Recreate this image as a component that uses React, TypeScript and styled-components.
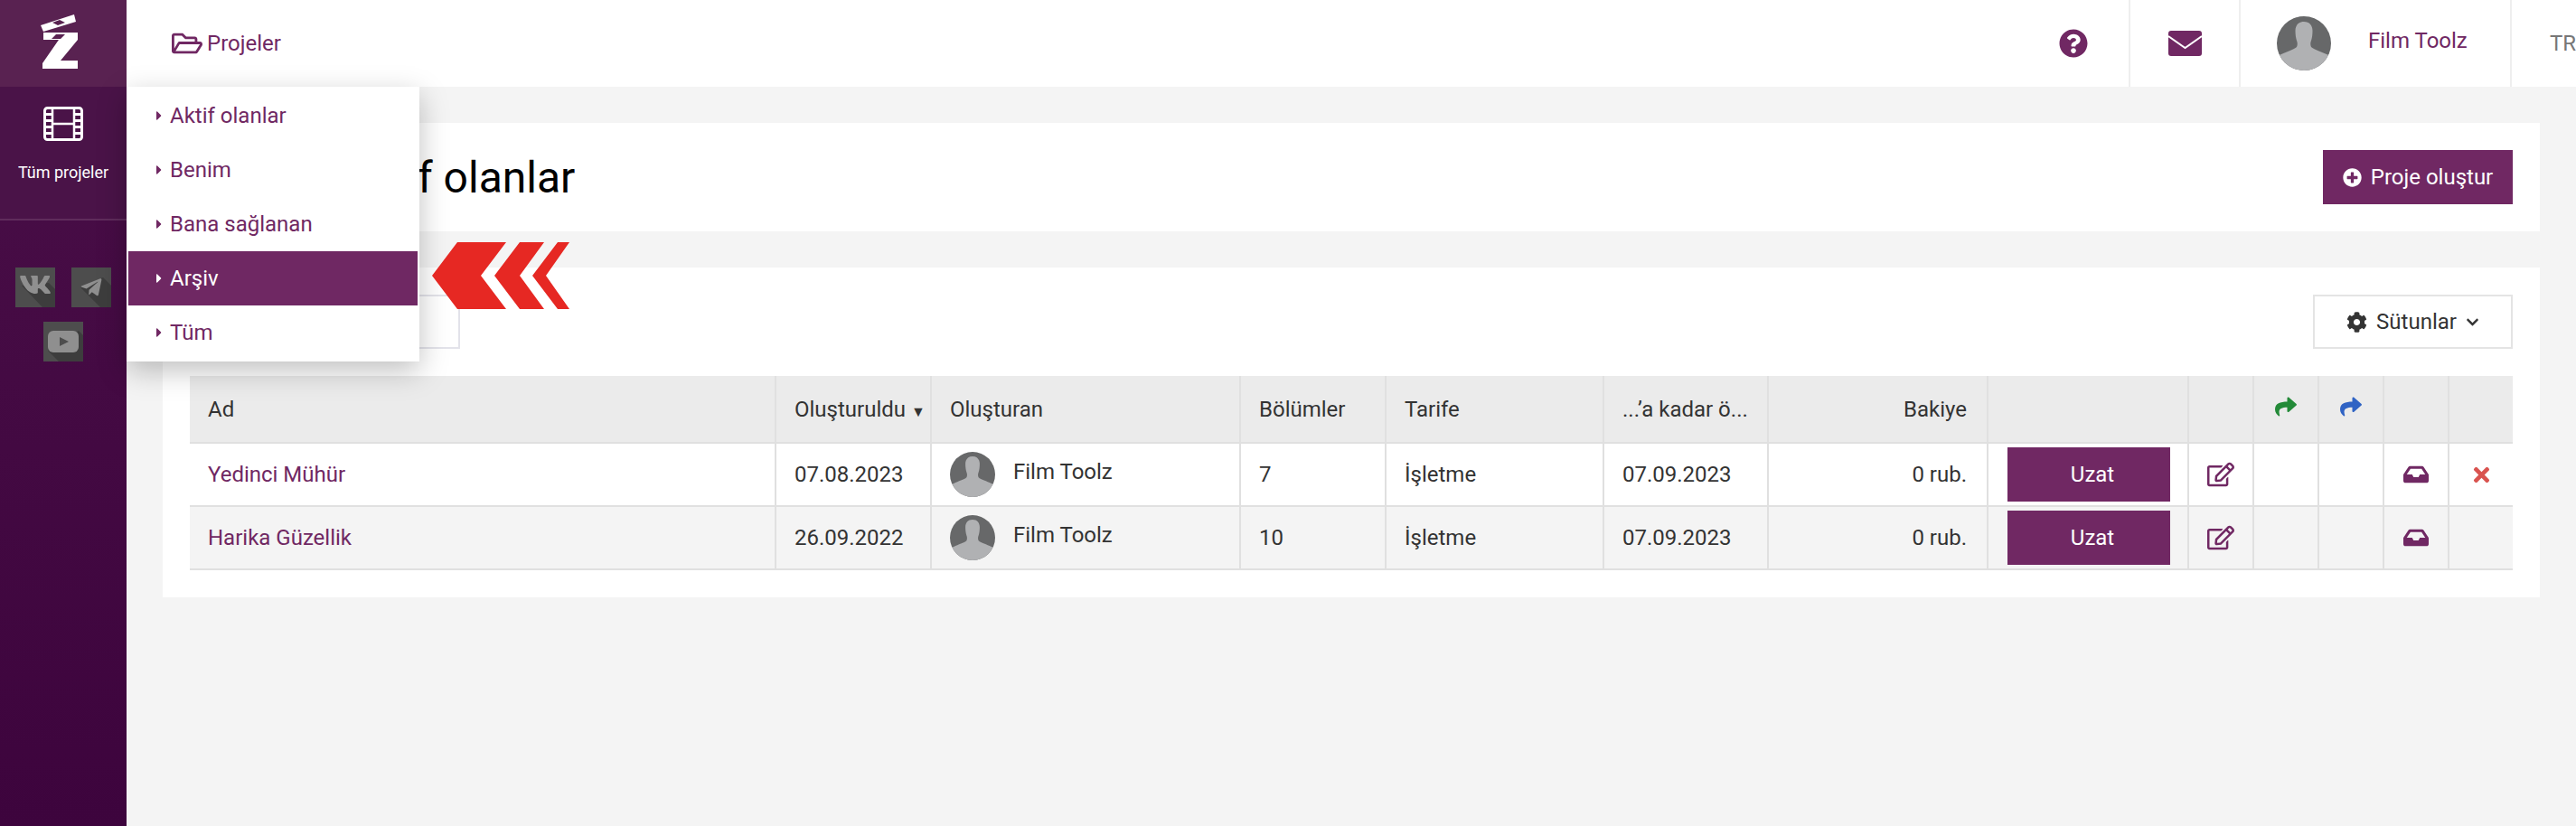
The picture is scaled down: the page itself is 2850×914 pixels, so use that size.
import React from "react";
import styled, { createGlobalStyle } from "styled-components";
import {
  FaCaretRight, FaChevronDown, FaCog, FaEdit, FaInbox, FaPlusCircle, FaQuestionCircle,
  FaRegEdit, FaRegFolderOpen, FaShare, FaTelegramPlane, FaTimes, FaVk,
} from "react-icons/fa";

const PURPLE = "#702863";
const Global = createGlobalStyle`
  html, body { margin: 0; padding: 0; background: #f4f4f4; }
  body { font-family: Roboto, "Liberation Sans", sans-serif; color: #333; }
  * { box-sizing: border-box; }
`;
const Page = styled.div`position: relative; display: flex; width: 2850px; height: 914px; overflow: hidden;`;
const Sidebar = styled.aside`width: 140px; flex: none; display: flex; flex-direction: column; background: linear-gradient(180deg, #4a0f48 0%, #3d043d 100%);`;
const LogoTile = styled.div`height: 96px; display: flex; justify-content: center; background: #592251;`;
const NavTile = styled.div`height: 148px; border-bottom: 2px solid #5f2c5c; background: #4a1348; display: flex; flex-direction: column; align-items: center; padding-top: 22px; color: #fff; font-size: 18px; gap: 24px;`;
const Socials = styled.div`display: flex; flex-wrap: wrap; justify-content: center; gap: 16px 18px; padding: 52px 14px 0;`;
const Main = styled.div`flex: 1; min-width: 0; display: flex; flex-direction: column;`;
const Header = styled.header`height: 96px; flex: none; background: #fff; display: flex; align-items: stretch;`;
const Crumb = styled.div`display: flex; align-items: center; gap: 5px; padding-left: 50px; color: ${PURPLE}; font-size: 24px; margin-right: auto;`;
const HeaderCell = styled.div<{ $w: number }>`width: ${(p) => p.$w}px; border-left: 2px solid #eee; display: flex; align-items: center; justify-content: center; color: ${PURPLE};`;
const HelpCell = styled.div`display: flex; align-items: center; padding-right: 45px; color: ${PURPLE};`;
const UserCell = styled(HeaderCell)`justify-content: flex-start; padding-left: 40px; gap: 41px; font-size: 24px; align-items: center;`;
const UserName = styled.span`position: relative; top: -3px;`;
const LangCell = styled(HeaderCell)`color: #777; font-size: 24px; justify-content: flex-end; padding-right: 0;`;
const Content = styled.main`padding: 40px 40px 0; display: flex; flex-direction: column; gap: 40px;`;
const Panel = styled.section`background: #fff; padding: 30px;`;
const TitleRow = styled.div`display: flex; justify-content: space-between; align-items: center; height: 60px;`;
const Title = styled.h1`margin: 0; font-size: 48px; font-weight: 400; color: #000; white-space: nowrap; padding-left: 169px;`;
const PrimaryButton = styled.button`height: 60px; width: 210px; border: 0; background: ${PURPLE}; color: #fff; font: 400 24px Roboto, sans-serif; display: flex; align-items: center; justify-content: center; gap: 10px;`;
const Toolbar = styled.div`display: flex; justify-content: space-between; margin-bottom: 30px;`;
const Search = styled.div`width: 299px; height: 60px; border: 2px solid #e3e3ea;`;
const ColumnsButton = styled.button`height: 60px; width: 221px; background: #fff; border: 2px solid #e4e4e4; color: #333; font: 400 24px Roboto, sans-serif; display: flex; align-items: center; justify-content: center; gap: 10px;`;
const Table = styled.table`width: 2570px; table-layout: fixed; border-collapse: collapse; font-size: 24px;`;
const Th = styled.th<{ $right?: boolean }>`height: 74px; background: #ebebeb; font-weight: 400; color: #333; text-align: ${(p) => (p.$right ? "right" : "left")}; padding: 0 22px 0 20px; border-left: 2px solid #e0e0e0; border-bottom: 2px solid #e0e0e0; white-space: nowrap; overflow: hidden; &:first-child { border-left: 0; }`;
const Tr = styled.tr<{ $alt?: boolean }>`background: ${(p) => (p.$alt ? "#f4f4f4" : "#fff")};`;
const Td = styled.td<{ $right?: boolean; $center?: boolean }>`height: 70px; padding: 0 22px 0 20px; border-left: 2px solid #e0e0e0; border-bottom: 2px solid #e0e0e0; text-align: ${(p) => (p.$right ? "right" : p.$center ? "center" : "left")}; white-space: nowrap; &:first-child { border-left: 0; }`;
const IconTd = styled(Td)`padding: 0; text-align: center; line-height: 0;`;
const ProjectLink = styled.a`color: ${PURPLE};`;
const Author = styled.div`display: flex; gap: 20px;  align-items: center;`;
const AuthorName = styled.span`position: relative; top: -3px;`;
const Extend = styled.button`width: 180px; height: 60px; border: 0; background: ${PURPLE}; color: #fff; font: 400 24px Roboto, sans-serif; padding: 0 0 0 8px; display: block;`;
const Menu = styled.nav`position: absolute; left: 140px; top: 96px; width: 324px; height: 304px; padding: 2px; background: #fff; box-shadow: 0 10px 30px rgba(0, 0, 0, 0.25); z-index: 3;`;
const MenuItem = styled.div<{ $active?: boolean }>`height: 60px; display: flex; align-items: center; gap: 4px; padding-left: 26px; font-size: 24px; color: ${(p) => (p.$active ? "#fff" : PURPLE)}; background: ${(p) => (p.$active ? "#6f2863" : "transparent")};`;
const Arrows = styled.svg`position: absolute; left: 478px; top: 268px; z-index: 4;`;

const Avatar = ({ size }: { size: number }) => (
  <svg width={size} height={size} viewBox="0 0 60 60" style={{ flex: "none", display: "block" }}>
    <defs><clipPath id={`av${size}`}><circle cx="30" cy="30" r="30" /></clipPath></defs>
    <g clipPath={`url(#av${size})`}>
      <rect width="60" height="60" fill="#676869" />
      <path fill="#b0b1b3" d="M30 6c6 0 9.500 4 9.500 10 0 4-.5 8-1.500 11-1 2-1 5 0 7 3 3 11 5 17 8l5 2v16H0V44l5-2c6-3 14-5 17-8 1-2 1-5 0-7-1-3-1.500-7-1.500-11C20.500 10 24 6 30 6z" />
    </g>
  </svg>
);
const Logo = () => (
  <svg width="140" height="96" viewBox="0 0 140 96">
    <path fill="#fff" d="M45 28 82 16l2 8-36 11z" />
    <path fill="#592251" d="M58 25l8-3 6 3-8 3z" />
    <path fill="#fff" fillRule="evenodd" d="M48 36h38v8L67 67h19v9H47v-6l18-26H48zM62 38l-5 5h10l5-5z" />
  </svg>
);
const Film = () => (
  <svg width="44" height="38" viewBox="0 0 44 38">
    <rect x="1.500" y="1.500" width="41" height="35" rx="3" fill="none" stroke="#fff" strokeWidth="3" />
    <path fill="none" stroke="#fff" strokeWidth="2.500" d="M10 2v34M34 2v34M10 19h24" />
    <path fill="#fff" d="M3 7h7v3H3zM3 14h7v3H3zM3 21h7v3H3zM3 28h7v3H3zM34 7h7v3h-7zM34 14h7v3h-7zM34 21h7v3h-7zM34 28h7v3h-7z" />
  </svg>
);
const Envelope = () => (
  <svg width="37" height="28" viewBox="0 0 37 28">
    <rect width="37" height="28" rx="3" fill={PURPLE} />
    <path d="M0 6l18.500 13L37 6" fill="none" stroke="#fff" strokeWidth="2" />
  </svg>
);
const Tile = ({ children, shadow }: { children: React.ReactNode; shadow: string }) => (
  <svg width="44" height="44" viewBox="0 0 44 44" style={{ display: "block" }}>
    <rect width="44" height="44" fill="#4d4d4d" />
    <polygon points={shadow} fill="#3d3d3d" />
    {children}
  </svg>
);
const Chevrons = () => (
  <Arrows width="152" height="74" viewBox="478 268 152 74">
    <polygon fill="#e62823" points="506,268 560,268 532,305 560,342 506,342 478,305" />
    <polygon fill="#e62823" points="575,268 602,268 575,305 602,342 575,342 547,305" />
    <polygon fill="#e62823" points="617,268 630,268 604,305 630,342 617,342 589,305" />
  </Arrows>
);
const widths = [648, 172, 342, 161, 241, 182, 243, 222, 72, 72, 72, 72, 71];
const rows = [
  { name: "Yedinci Mühür", created: "07.08.2023", parts: "7", del: true },
  { name: "Harika Güzellik", created: "26.09.2022", parts: "10", del: false },
];
const menu = ["Aktif olanlar", "Benim", "Bana sağlanan", "Arşiv", "Tüm"];

export default function App() {
  return (
    <Page>
      <Global />
      <Sidebar>
        <LogoTile><Logo /></LogoTile>
        <NavTile><Film /><span>Tüm projeler</span></NavTile>
        <Socials>
          <Tile shadow="7,20 37,17 44,24 44,44 30,44"><FaVk x={4} y={1} size={36} color="#8f8f8f" /></Tile>
          <Tile shadow="10,22 35,11 44,20 44,44 32,44"><FaTelegramPlane x={9} y={9} size={26} color="#8f8f8f" /></Tile>
          <Tile shadow="5,32 39,10 44,15 44,44 17,44">
            <rect x="5" y="10" width="34" height="24" rx="6" fill="#8f8f8f" />
            <path d="M18 17l10 5-10 5z" fill="#4d4d4d" />
          </Tile>
        </Socials>
      </Sidebar>
      <Main>
        <Header>
          <Crumb><FaRegFolderOpen size={34} />Projeler</Crumb>
          <HelpCell><FaQuestionCircle size={32} /></HelpCell>
          <HeaderCell $w={122}><Envelope /></HeaderCell>
          <UserCell $w={300}><Avatar size={60} /><UserName>Film Toolz</UserName></UserCell>
          <LangCell $w={73}>TR</LangCell>
        </Header>
        <Content>
          <Panel>
            <TitleRow>
              <Title>Aktif olanlar</Title>
              <PrimaryButton><FaPlusCircle size={21} />Proje oluştur</PrimaryButton>
            </TitleRow>
          </Panel>
          <Panel>
            <Toolbar>
              <Search />
              <ColumnsButton><FaCog size={23} />Sütunlar<FaChevronDown size={15} /></ColumnsButton>
            </Toolbar>
            <Table>
              <colgroup>{widths.map((w, i) => <col key={i} width={w} />)}</colgroup>
              <thead>
                <tr>
                  <Th>Ad</Th>
                  <Th>Oluşturuldu <span style={{ fontSize: 16 }}>▼</span></Th>
                  <Th>Oluşturan</Th>
                  <Th>Bölümler</Th>
                  <Th>Tarife</Th>
                  <Th>...’a kadar ö...</Th>
                  <Th $right>Bakiye</Th>
                  <Th />
                  <Th />
                  <Th style={{ textAlign: "center", padding: 0 }}><FaShare size={24} color="#238a38" /></Th>
                  <Th style={{ textAlign: "center", padding: 0 }}><FaShare size={24} color="#2f63c4" /></Th>
                  <Th />
                  <Th />
                </tr>
              </thead>
              <tbody>
                {rows.map((r, i) => (
                  <Tr key={r.name} $alt={i === 1}>
                    <Td><ProjectLink>{r.name}</ProjectLink></Td>
                    <Td>{r.created}</Td>
                    <Td><Author><Avatar size={50} /><AuthorName>Film Toolz</AuthorName></Author></Td>
                    <Td>{r.parts}</Td>
                    <Td>İşletme</Td>
                    <Td>07.09.2023</Td>
                    <Td $right>0 rub.</Td>
                    <Td style={{ padding: "0 0 0 21px" }}><Extend>Uzat</Extend></Td>
                    <IconTd><FaRegEdit size={30} color={PURPLE} /></IconTd>
                    <IconTd />
                    <IconTd />
                    <IconTd><FaInbox size={28} color={PURPLE} /></IconTd>
                    <IconTd>{r.del && <FaTimes size={25} color="#d9534f" />}</IconTd>
                  </Tr>
                ))}
              </tbody>
            </Table>
          </Panel>
        </Content>
      </Main>
      <Menu>
        {menu.map((m) => (
          <MenuItem key={m} $active={m === "Arşiv"}><FaCaretRight size={16} />{m}</MenuItem>
        ))}
      </Menu>
      <Chevrons />
    </Page>
  );
}
